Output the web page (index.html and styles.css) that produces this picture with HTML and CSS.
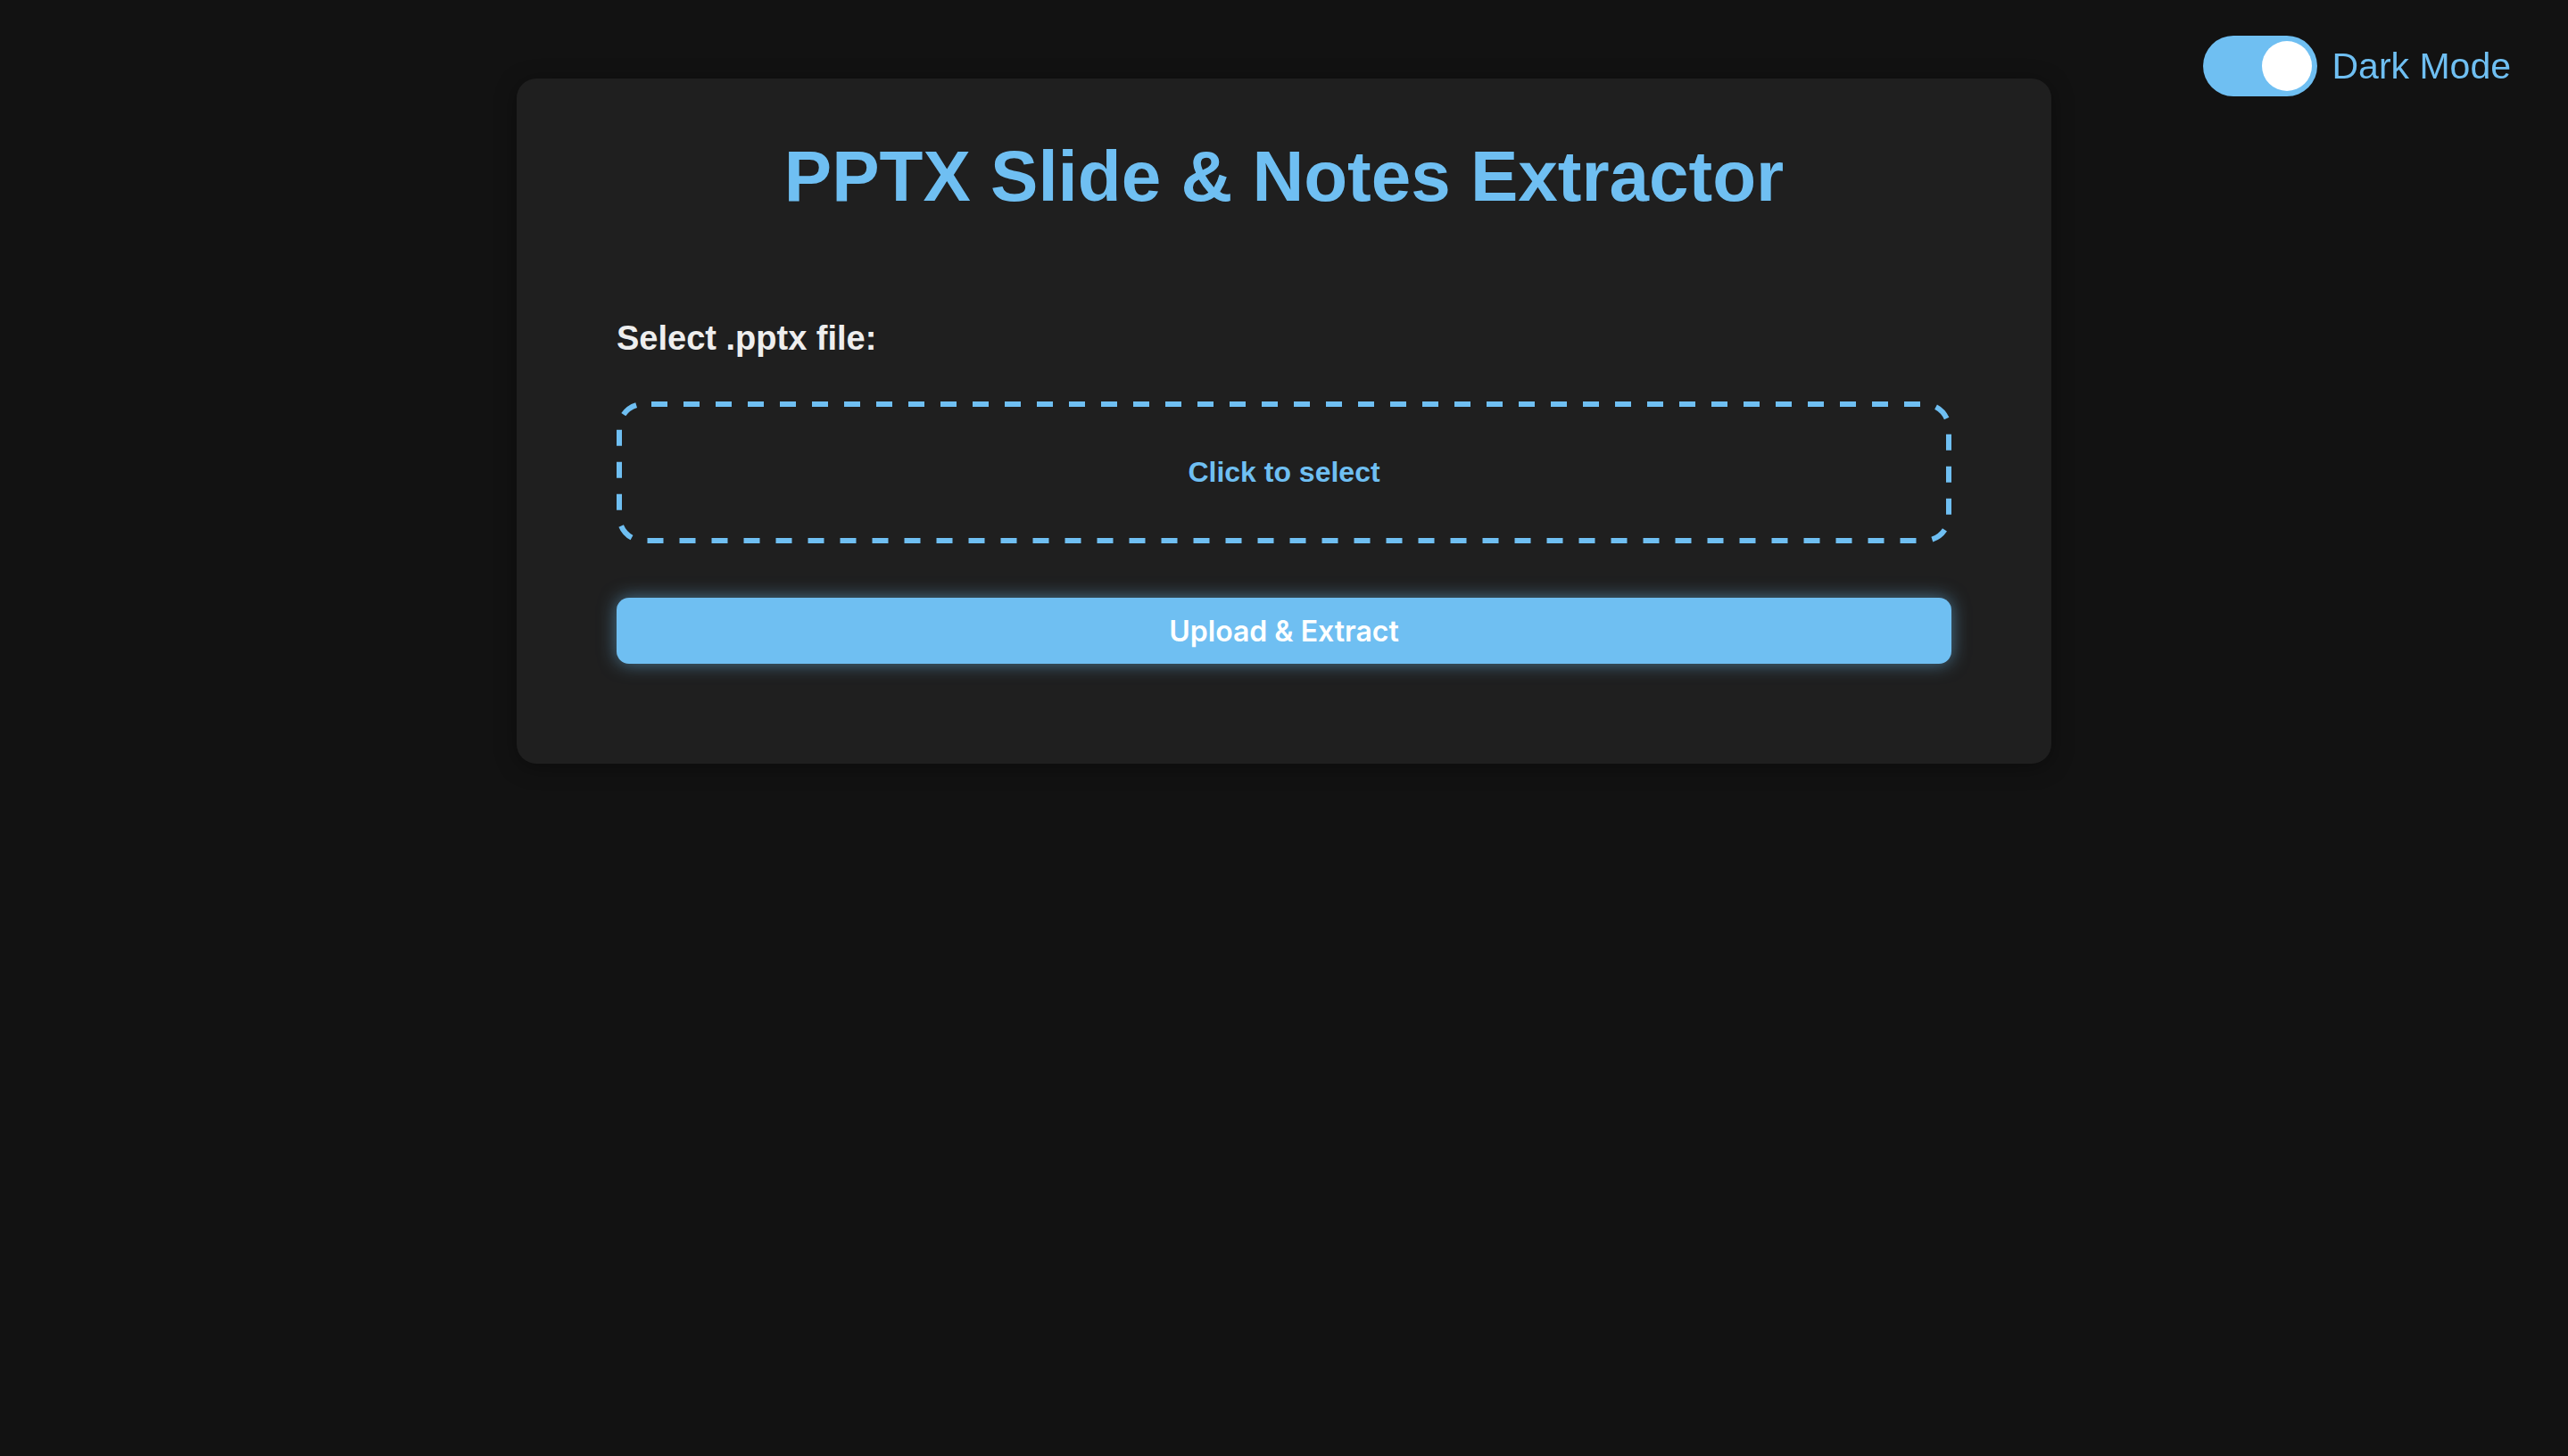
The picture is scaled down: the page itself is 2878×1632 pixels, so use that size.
FILE: index.html
```html
<!DOCTYPE html>
<html lang="en">
<head>
<meta charset="utf-8">
<title>PPTX Slide &amp; Notes Extractor</title>
<link rel="stylesheet" href="styles.css">
</head>
<body>
  <div class="theme-toggle">
    <span class="switch"><span class="knob"></span></span>
    <span class="toggle-label">Dark Mode</span>
  </div>
  <main class="card">
    <h1 class="title">PPTX Slide &amp; Notes Extractor</h1>
    <form class="upload-form">
      <label class="field-label">Select .pptx file:</label>
      <div class="dropzone">
        <svg class="dash-frame" width="1496" height="159" viewBox="0 0 1496 159" aria-hidden="true">
          <rect x="3" y="3" width="1490" height="153" rx="27" ry="27" fill="none" stroke="#6fbff2" stroke-width="6" stroke-dasharray="18 18" stroke-dashoffset="-9"></rect>
        </svg>
        <span class="drop-text">Click to select</span>
      </div>
      <button type="button" class="submit-btn">Upload &amp; Extract</button>
    </form>
  </main>
</body>
</html>
```

FILE: styles.css
```css
html, body {
  margin: 0;
  padding: 0;
}
body {
  background: #121212;
  min-height: 1632px;
  font-family: "Liberation Sans", Arial, sans-serif;
  padding-top: 88px;
  box-sizing: border-box;
}
.theme-toggle {
  position: fixed;
  top: 40px;
  right: 64px;
  display: flex;
  align-items: center;
  gap: 16px;
}
.switch {
  width: 128px;
  height: 68px;
  border-radius: 34px;
  background: #6fbff2;
  display: flex;
  align-items: center;
  justify-content: flex-end;
  padding: 0 6px;
  box-sizing: border-box;
}
.knob {
  width: 56px;
  height: 56px;
  border-radius: 50%;
  background: #ffffff;
}
.toggle-label {
  color: #6fbff2;
  font-size: 41px;
  line-height: 1;
}
.card {
  width: 1720px;
  margin: 0 auto;
  background: #1f1f1f;
  border-radius: 22px;
  padding: 64px 112px 112px;
  box-sizing: border-box;
  box-shadow: 0 4px 24px rgba(0, 0, 0, 0.35);
}
.title {
  margin: 0;
  text-align: center;
  color: #6fbff2;
  font-size: 80px;
  line-height: 92px;
  font-weight: bold;
}
.upload-form {
  display: flex;
  flex-direction: column;
  margin-top: 113px;
}
.field-label {
  color: #eeeeee;
  font-size: 38px;
  line-height: 44px;
  font-weight: bold;
}
.dropzone {
  position: relative;
  margin-top: 49px;
  height: 159px;
  display: flex;
  align-items: center;
  justify-content: center;
  color: #6fbff2;
  font-size: 32px;
  font-weight: bold;
}
.dash-frame {
  position: absolute;
  left: 0;
  top: 0;
}
.drop-text {
  position: relative;
}
.submit-btn {
  margin-top: 61px;
  height: 74px;
  border: none;
  border-radius: 14px;
  background: #6fbff2;
  color: #ffffff;
  font-family: Inter, "Liberation Sans", sans-serif;
  font-weight: 600;
  font-size: 32px;
  box-shadow: 0 0 20px rgba(111, 191, 242, 0.55);
  cursor: pointer;
}
```
